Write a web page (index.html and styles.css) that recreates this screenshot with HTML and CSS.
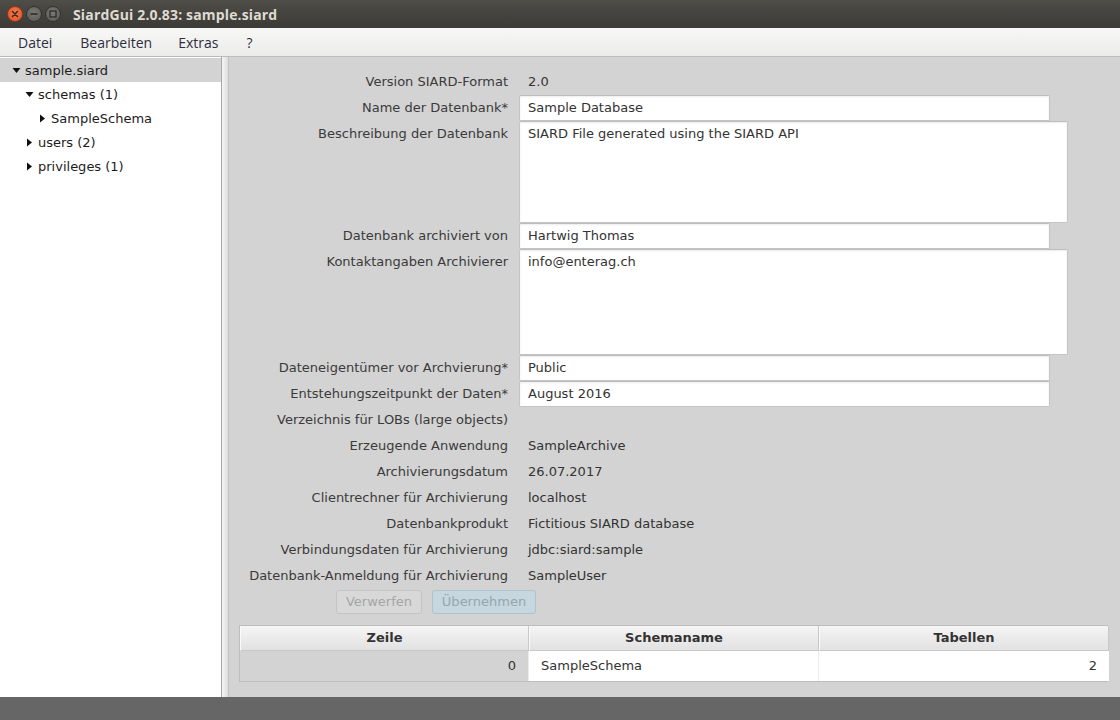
FILE: index.html
```html
<!DOCTYPE html>
<html>
<head>
<meta charset="utf-8">
<title>SiardGui</title>
<link rel="stylesheet" href="styles.css">
</head>
<body>
<div class="window">
  <div class="titlebar">
    <div class="controls">
      <span class="wbtn close"><svg width="16" height="16" viewBox="0 0 16 16"><path d="M5.5 5.5 L10.5 10.5 M10.5 5.5 L5.5 10.5" stroke="#3a2a22" stroke-width="1.6" stroke-linecap="round"/></svg></span>
      <span class="wbtn"><svg width="16" height="16" viewBox="0 0 16 16"><path d="M4.5 8 H11.5" stroke="#2f2e2b" stroke-width="1.6"/></svg></span>
      <span class="wbtn"><svg width="16" height="16" viewBox="0 0 16 16"><rect x="5" y="5" width="6" height="6" fill="none" stroke="#2f2e2b" stroke-width="1.3"/></svg></span>
    </div>
    <div class="title">SiardGui 2.0.83: sample.siard</div>
  </div>
  <div class="menubar">
    <span class="menu m1">Datei</span>
    <span class="menu m2">Bearbeiten</span>
    <span class="menu m3">Extras</span>
    <span class="menu m4">?</span>
  </div>
  <div class="main">
    <div class="tree">
      <div class="node sel lvl0"><svg class="arrow" width="9" height="9" viewBox="0 0 9 9"><path d="M0.5 2 H8.5 L4.5 7 Z" fill="#111"/></svg>sample.siard</div>
      <div class="node lvl1"><svg class="arrow" width="9" height="9" viewBox="0 0 9 9"><path d="M0.5 2 H8.5 L4.5 7 Z" fill="#111"/></svg>schemas (1)</div>
      <div class="node lvl2"><svg class="arrow" width="9" height="9" viewBox="0 0 9 9"><path d="M2 0.5 V8.5 L7 4.5 Z" fill="#111"/></svg>SampleSchema</div>
      <div class="node lvl1"><svg class="arrow" width="9" height="9" viewBox="0 0 9 9"><path d="M2 0.5 V8.5 L7 4.5 Z" fill="#111"/></svg>users (2)</div>
      <div class="node lvl1"><svg class="arrow" width="9" height="9" viewBox="0 0 9 9"><path d="M2 0.5 V8.5 L7 4.5 Z" fill="#111"/></svg>privileges (1)</div>
    </div>
    <div class="splitter"></div>
    <div class="content">
      <div class="form">
        <div class="lbl">Version SIARD-Format</div><div class="val">2.0</div>
        <div class="lbl">Name der Datenbank*</div><div class="cell"><div class="field">Sample Database</div></div>
        <div class="lbl">Beschreibung der Datenbank</div><div class="cell"><div class="area a1">SIARD File generated using the SIARD API</div></div>
        <div class="lbl">Datenbank archiviert von</div><div class="cell"><div class="field">Hartwig Thomas</div></div>
        <div class="lbl">Kontaktangaben Archivierer</div><div class="cell"><div class="area a2">info@enterag.ch</div></div>
        <div class="lbl">Dateneigentümer vor Archvierung*</div><div class="cell"><div class="field">Public</div></div>
        <div class="lbl">Entstehungszeitpunkt der Daten*</div><div class="cell"><div class="field">August 2016</div></div>
        <div class="lbl">Verzeichnis für LOBs (large objects)</div><div class="val"></div>
        <div class="lbl">Erzeugende Anwendung</div><div class="val">SampleArchive</div>
        <div class="lbl">Archivierungsdatum</div><div class="val">26.07.2017</div>
        <div class="lbl">Clientrechner für Archivierung</div><div class="val">localhost</div>
        <div class="lbl">Datenbankprodukt</div><div class="val">Fictitious SIARD database</div>
        <div class="lbl">Verbindungsdaten für Archivierung</div><div class="val">jdbc:siard:sample</div>
        <div class="lbl">Datenbank-Anmeldung für Archivierung</div><div class="val">SampleUser</div>
      </div>
      <div class="buttons">
        <span class="btn discard">Verwerfen</span>
        <span class="btn apply">Übernehmen</span>
      </div>
      <div class="table">
        <div class="th">Zeile</div>
        <div class="th">Schemaname</div>
        <div class="th">Tabellen</div>
        <div class="td num gray">0</div>
        <div class="td">SampleSchema</div>
        <div class="td num">2</div>
      </div>
    </div>
  </div>
  <div class="statusbar"></div>
</div>
</body>
</html>
```

FILE: styles.css
```css
* { box-sizing: border-box; }
html, body { margin: 0; padding: 0; }
body {
  width: 1120px;
  height: 720px;
  overflow: hidden;
  font-family: "DejaVu Sans", sans-serif;
  font-size: 13px;
  color: #333;
  background: #d3d3d3;
}
.window { display: flex; flex-direction: column; height: 720px; }

.titlebar {
  height: 28px;
  background: linear-gradient(#4f4d48, #3b3a36);
  display: flex;
  align-items: center;
}
.controls { display: flex; gap: 3px; padding-left: 7px; width: 73px; }
.wbtn {
  width: 16px; height: 16px; border-radius: 50%;
  background: radial-gradient(circle at 50% 40%, #7a7873, #5a5954);
  border: 1px solid #33322f;
  display: flex; align-items: center; justify-content: center;
}
.wbtn svg { display: block; margin: -1px; }
.wbtn.close { background: radial-gradient(circle at 50% 40%, #f47a4e, #e0501f); border-color: #8a3a1a; }
.title {
  color: #dfdbd2;
  font-family: "Open Sans", sans-serif;
  font-weight: bold;
  font-size: 14px;
  letter-spacing: 0.15px;
}

.menubar {
  height: 29px;
  background: linear-gradient(#f7f7f6, #ececeb);
  border-bottom: 1px solid #bcbcbc;
  display: flex;
  align-items: center;
  font-family: "Open Sans", sans-serif;
  font-size: 14px;
  color: #2e2e40;
}
.menu.m1 { margin-left: 18px; }
.menu.m2 { margin-left: 28px; }
.menu.m3 { margin-left: 26px; }
.menu.m4 { margin-left: 28px; }

.main { flex: 1; display: flex; min-height: 0; }
.tree {
  width: 222px;
  background: #fff;
  border-right: 1px solid #a8a8a8;
  padding-top: 1px;
  color: #1c1c1c;
}
.node { height: 24px; display: flex; align-items: center; }
.node.sel { background: #d3d3d3; }
.arrow { margin-right: 4px; flex: none; }
.lvl0 { padding-left: 12px; }
.lvl1 { padding-left: 25px; }
.lvl2 { padding-left: 38px; }

.splitter {
  width: 7px;
  background: linear-gradient(to right, #f5f5f5, #dedede);
  border-right: 1px solid #c2c2c2;
}
.content {
  flex: 1;
  background: #d3d3d3;
  padding: 12px 12px 0 10px;
}

.form {
  display: grid;
  grid-template-columns: 269px 1fr;
  column-gap: 11px;
  grid-auto-rows: auto;
}
.lbl {
  text-align: right;
  height: 26px;
  line-height: 26px;
  color: #3a3a3a;
  white-space: nowrap;
}
.val {
  height: 26px;
  line-height: 26px;
  padding-left: 9px;
  color: #333;
}
.cell { display: flex; align-items: flex-start; }
.field, .area {
  background: #fff;
  border: 1px solid #c4c4c4;
  border-top-color: #bdbdbd;
  border-radius: 2px;
  box-shadow: inset 0 1px 2px rgba(0,0,0,0.08);
  padding-left: 8px;
  color: #333;
}
.field { width: 531px; height: 26px; line-height: 24px; }
.area { width: 549px; padding-top: 3px; line-height: 18px; }
.area.a1 { height: 102px; }
.area.a2 { height: 106px; }

.buttons {
  display: flex;
  gap: 10px;
  padding-left: 97px;
  height: 26px;
  align-items: center;
}
.btn {
  height: 24px;
  line-height: 22px;
  border-radius: 3px;
  border: 1px solid #c4c4c4;
  font-size: 13px;
  text-align: center;
}
.btn.discard { background: #d8d8d8; color: #a5a5a5; width: 86px; }
.btn.apply { background: #c6d7df; border-color: #adc2cb; color: #97a6ac; width: 104px; }

.table {
  margin-top: 10px;
  width: 869px;
  display: grid;
  grid-template-columns: 289px 290px 290px;
  border: 1px solid #bdbdbd;
}
.th {
  height: 25px;
  line-height: 24px;
  text-align: center;
  font-weight: bold;
  color: #333;
  background: linear-gradient(#f5f5f5, #e2e2e2);
  border-right: 1px solid #c8c8c8;
  border-bottom: 1px solid #c8c8c8;
  border-left: 1px solid #fafafa;
}
.th:last-child { border-right: none; }
.td {
  height: 30px;
  line-height: 30px;
  background: #fff;
  padding: 0 12px;
  color: #333;
  border-right: 1px solid #ececec;
}
.td:last-child { border-right: none; }
.td.gray { background: #d3d3d3; }
.td.num { text-align: right; }

.statusbar { height: 23px; background: #666; }
```
